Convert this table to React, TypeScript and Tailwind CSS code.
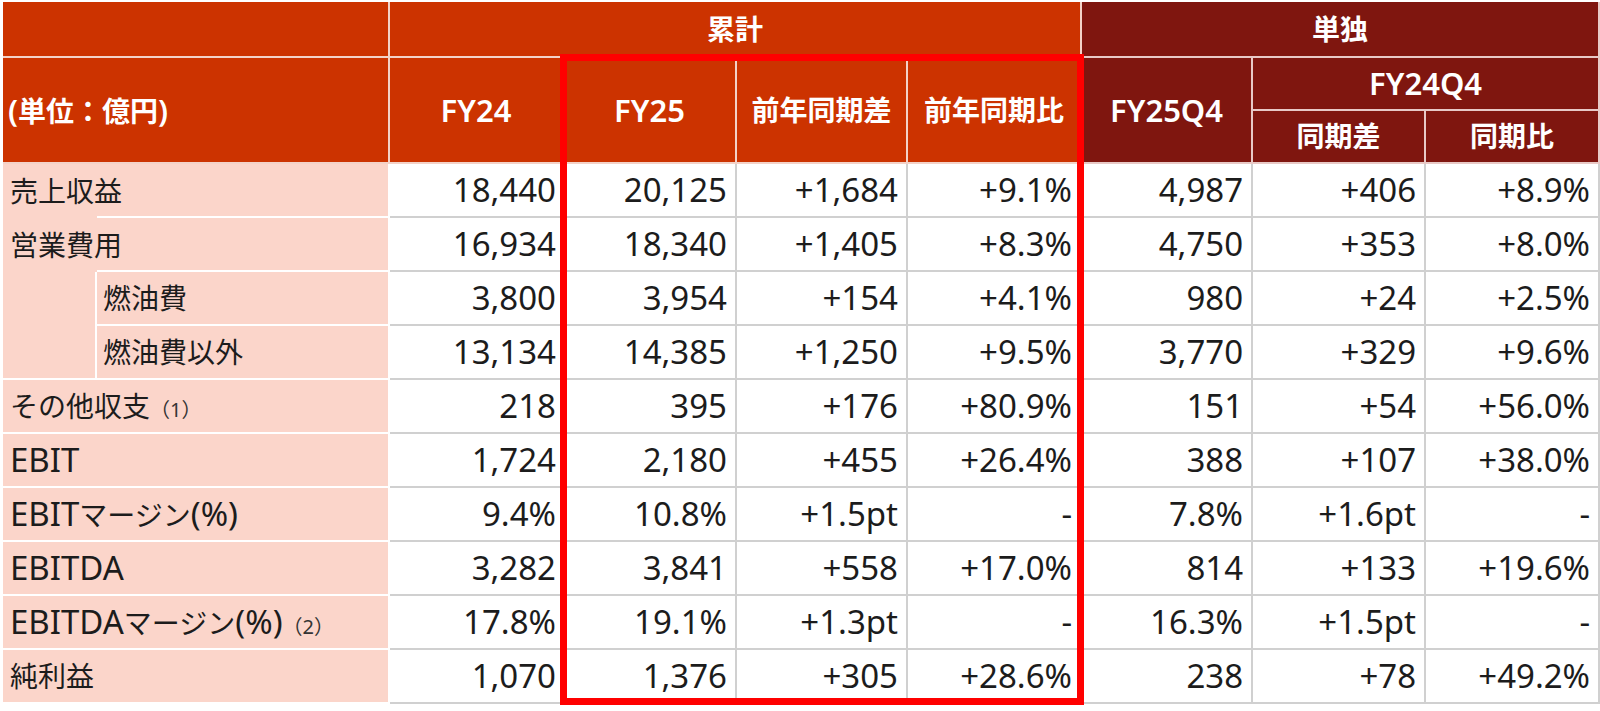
import React from "react";

type Row = { label: string; note?: string; kind?: "open" | "sub"; first?: boolean; vals: string[] };

const rows: Row[] = [
  { label: "売上収益", kind: "open", vals: ["18,440", "20,125", "+1,684", "+9.1%", "4,987", "+406", "+8.9%"] },
  { label: "営業費用", kind: "open", vals: ["16,934", "18,340", "+1,405", "+8.3%", "4,750", "+353", "+8.0%"] },
  { label: "燃油費", kind: "sub", first: true, vals: ["3,800", "3,954", "+154", "+4.1%", "980", "+24", "+2.5%"] },
  { label: "燃油費以外", kind: "sub", vals: ["13,134", "14,385", "+1,250", "+9.5%", "3,770", "+329", "+9.6%"] },
  { label: "その他収支", note: "（1）", vals: ["218", "395", "+176", "+80.9%", "151", "+54", "+56.0%"] },
  { label: "EBIT", vals: ["1,724", "2,180", "+455", "+26.4%", "388", "+107", "+38.0%"] },
  { label: "EBITマージン(%)", vals: ["9.4%", "10.8%", "+1.5pt", "-", "7.8%", "+1.6pt", "-"] },
  { label: "EBITDA", vals: ["3,282", "3,841", "+558", "+17.0%", "814", "+133", "+19.6%"] },
  { label: "EBITDAマージン(%)", note: "（2）", vals: ["17.8%", "19.1%", "+1.3pt", "-", "16.3%", "+1.5pt", "-"] },
  { label: "純利益", vals: ["1,070", "1,376", "+305", "+28.6%", "238", "+78", "+49.2%"] },
];

// latin glyphs run larger than the kana/kanji in the source font
function Mixed({ text, latin, cjk }: { text: string; latin: string; cjk: string }) {
  const parts = text.split(/([\x20-\x7e]+)/).filter(Boolean);
  return (
    <>
      {parts.map((p, i) => (
        <span key={i} className={/^[\x20-\x7e]+$/.test(p) ? latin : cjk}>
          {p}
        </span>
      ))}
    </>
  );
}

const hd = "bg-[#cc3300] text-white font-semibold border-b-2 border-r-2 border-[#f3d2c8] text-center";
const dk = "bg-[#7f160f] text-white font-semibold border-b-2 border-r-2 border-[#e8c9c6] text-center";
const lbl = "bg-[#fbd5ca] border-b-2 border-r-2 border-white text-left";
const cell = "bg-white border-b-2 border-r-2 border-[#d0d0d0] text-right text-[33px] text-[#1c1c1c]";

export default function App() {
  return (
    <div className="relative w-[1600px] h-[711px] bg-white pt-[2px] pl-[3px] font-['Noto_Sans','Noto_Sans_CJK_JP',sans-serif] overflow-hidden">
      <table className="w-[1597px] table-fixed border-separate border-spacing-0 leading-tight">
        <colgroup>
          <col className="w-[94px]" />
          <col className="w-[293px]" />
          <col className="w-[174px]" />
          <col className="w-[173px]" />
          <col className="w-[171px]" />
          <col className="w-[174px]" />
          <col className="w-[171px]" />
          <col className="w-[173px]" />
          <col className="w-[174px]" />
        </colgroup>
        <thead>
          <tr className="h-[56px]">
            <th colSpan={2} className={hd}></th>
            <th colSpan={4} className={`${hd} text-[28px]`}>累計</th>
            <th colSpan={3} className={`${dk} text-[28px]`}>単独</th>
          </tr>
          <tr className="h-[53px]">
            <th colSpan={2} rowSpan={2} className={`${hd} !text-left pl-[5px]`}>
              <Mixed text="(単位：億円)" latin="text-[31px]" cjk="text-[28px]" />
            </th>
            <th rowSpan={2} className={`${hd} text-[31px]`}>FY24</th>
            <th rowSpan={2} className={`${hd} text-[31px]`}>FY25</th>
            <th rowSpan={2} className={`${hd} text-[28px]`}>前年同期差</th>
            <th rowSpan={2} className={`${hd} text-[28px]`}>前年同期比</th>
            <th rowSpan={2} className={`${dk} text-[31px]`}>FY25Q4</th>
            <th colSpan={2} className={`${dk} text-[31px]`}>FY24Q4</th>
          </tr>
          <tr className="h-[53px]">
            <th className={`${dk} text-[28px]`}>同期差</th>
            <th className={`${dk} text-[28px]`}>同期比</th>
          </tr>
        </thead>
        <tbody>
          {rows.map((r) => (
            <tr key={r.label} className="h-[54px]">
              {r.kind === "open" && (
                <>
                  <td className="bg-[#fbd5ca] whitespace-nowrap pl-[7px] text-[#1c1c1c]">
                    <Mixed text={r.label} latin="text-[33px]" cjk="text-[28px]" />
                  </td>
                  <td className={lbl}></td>
                </>
              )}
              {r.kind === "sub" && (
                <>
                  {r.first && <td rowSpan={2} className={lbl}></td>}
                  <td className={`${lbl} pl-[6px] text-[#1c1c1c]`}>
                    <Mixed text={r.label} latin="text-[33px]" cjk="text-[28px]" />
                  </td>
                </>
              )}
              {!r.kind && (
                <td colSpan={2} className={`${lbl} pl-[7px] whitespace-nowrap text-[#1c1c1c]`}>
                  <Mixed text={r.label} latin="text-[33px]" cjk="text-[28px]" />
                  {r.note && <span className="text-[20px] text-[#333]">{r.note}</span>}
                </td>
              )}
              {r.vals.map((v, i) => (
                <td key={i} className={`${cell} ${i === 0 ? "pr-[6px]" : "pr-[8px]"}`}>
                  {v}
                </td>
              ))}
            </tr>
          ))}
        </tbody>
      </table>
      {/* highlight frame around the FY25 block */}
      <div className="absolute left-[560px] top-[54px] w-[524px] h-[651px] border-[7px] border-[#ff0000] pointer-events-none" />
    </div>
  );
}
